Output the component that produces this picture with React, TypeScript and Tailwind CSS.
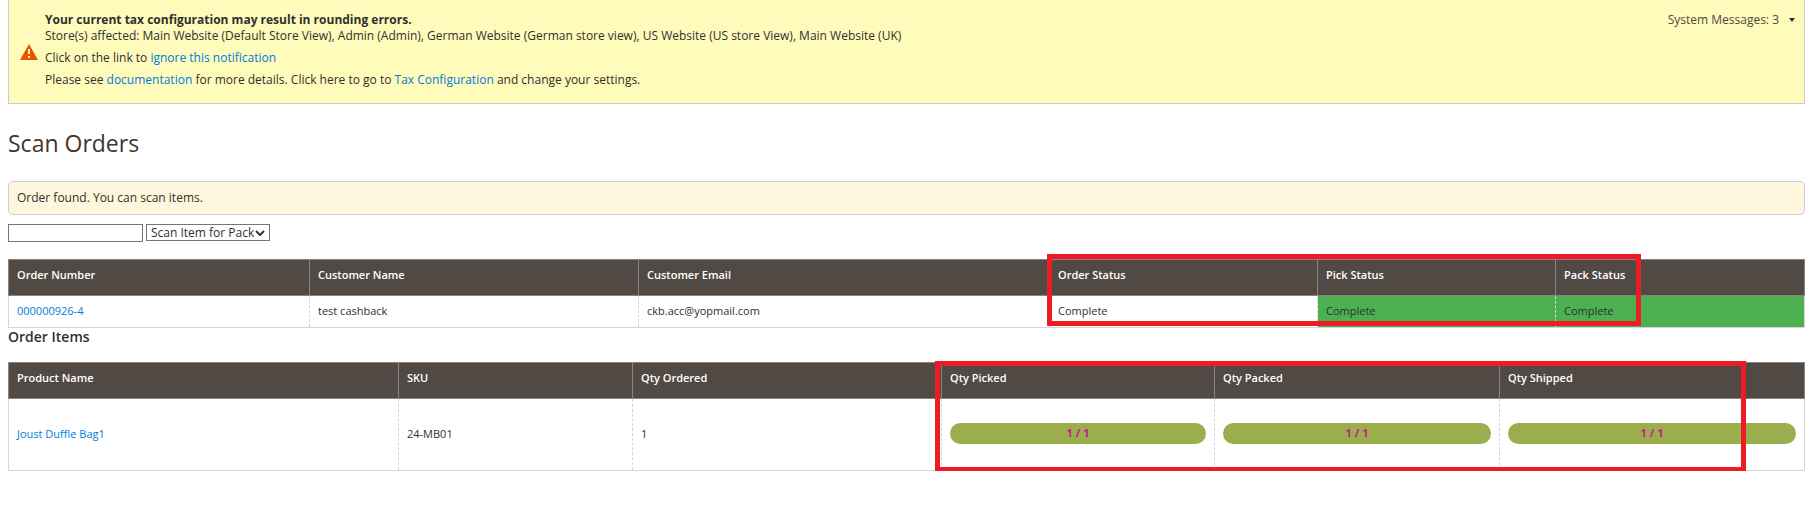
import type { ReactNode } from "react";

const OrderTable = () => {
  return (
    <div className="relative mt-[17px]">
      <table className="w-full table-fixed border-collapse text-[11px] leading-4">
        <colgroup>
          <col className="w-[301px]" />
          <col className="w-[329px]" />
          <col className="w-[411px]" />
          <col className="w-[268px]" />
          <col className="w-[238px]" />
          <col className="w-[249px]" />
        </colgroup>
        <thead>
          <tr>
            <Th>Order Number</Th>
            <Th>Customer Name</Th>
            <Th>Customer Email</Th>
            <Th>Order Status</Th>
            <Th>Pick Status</Th>
            <Th>Pack Status</Th>
          </tr>
        </thead>
        <tbody>
          <tr className="h-8">
            <Td>
              <Link>000000926-4</Link>
            </Td>
            <Td>test cashback</Td>
            <Td>ckb.acc@yopmail.com</Td>
            <Td>Complete</Td>
            <Td done>Complete</Td>
            <Td done>Complete</Td>
          </tr>
        </tbody>
      </table>
      <div className="pointer-events-none absolute -top-[5px] left-[57.8%] h-[72px] w-[33.1%] border-[5px] border-[#ed1c24]" />
    </div>
  );
};

const ItemsTable = () => {
  return (
    <div className="relative mt-4">
      <table className="w-full table-fixed border-collapse text-[11px] leading-4">
        <colgroup>
          <col className="w-[390px]" />
          <col className="w-[234px]" />
          <col className="w-[309px]" />
          <col className="w-[273px]" />
          <col className="w-[285px]" />
          <col className="w-[305px]" />
        </colgroup>
        <thead>
          <tr>
            <Th>Product Name</Th>
            <Th>SKU</Th>
            <Th>Qty Ordered</Th>
            <Th>Qty Picked</Th>
            <Th>Qty Packed</Th>
            <Th>Qty Shipped</Th>
          </tr>
        </thead>
        <tbody>
          <tr className="h-[72px]">
            <Td>
              <Link>Joust Duffle Bag1</Link>
            </Td>
            <Td>24-MB01</Td>
            <Td>1</Td>
            <Td>
              <QtyBar />
            </Td>
            <Td>
              <QtyBar />
            </Td>
            <Td>
              <QtyBar />
            </Td>
          </tr>
        </tbody>
      </table>
      <div className="pointer-events-none absolute -top-px left-[51.6%] h-[111px] w-[45.1%] border-[5px] border-[#ed1c24]" />
    </div>
  );
};

const Th = ({ children }: { children: ReactNode }) => (
  <th className="h-9 border border-[#8a837f] bg-[#514943] px-2 pb-[6px] text-left font-semibold text-white">
    {children}
  </th>
);

const Td = ({ children, done }: { children: ReactNode; done?: boolean }) => (
  <td
    className={
      done
        ? "border-x border-b border-dashed border-[#d6d6d6] bg-[#4caf50] px-2 pb-[2px] [border-bottom-style:solid] last:[border-right-style:solid]"
        : "border-x border-b border-dashed border-[#d6d6d6] px-2 pb-[2px] [border-bottom-style:solid] first:[border-left-style:solid] last:[border-right-style:solid]"
    }
  >
    {children}
  </td>
);

const QtyBar = () => (
  <div className="h-[21px] rounded-full bg-[#9aae4d] text-center leading-5 font-bold text-[#cc1199]">
    1 / 1
  </div>
);

const Link = ({ children }: { children: ReactNode }) => (
  <a href="#" className="text-[#007bdb]">
    {children}
  </a>
);

const SystemMessages = () => {
  return (
    <div className="flex items-start border-x border-b border-[#ccc] bg-[#fffbbb] pt-3 pr-[9px] pb-[15px] pl-[11px] text-xs">
      <svg viewBox="0 0 18 16" className="mt-8 h-4 w-[18px] shrink-0">
        <path d="M9 0 18 16H0z" fill="#eb5202" />
        <path d="M8 5h2v5H8zM8 12h2v2H8z" fill="#fffbbb" />
      </svg>
      <div className="ml-[7px] flex-1 leading-4">
        <p className="font-bold">
          Your current tax configuration may result in rounding errors.
        </p>
        <p>
          Store(s) affected: Main Website (Default Store View), Admin (Admin),
          German Website (German store view), US Website (US store View), Main
          Website (UK)
        </p>
        <p className="mt-[6px]">
          Click on the link to <Link>ignore this notification</Link>
        </p>
        <p className="mt-[6px]">
          Please see <Link>documentation</Link> for more details. Click here to
          go to <Link>Tax Configuration</Link> and change your settings.
        </p>
      </div>
      <button className="flex items-center gap-[10px] leading-4 text-[#514943]">
        System Messages: 3
        <svg viewBox="0 0 6 4" className="h-1 w-[6px]">
          <path d="M0 0h6L3 4z" fill="#303030" />
        </svg>
      </button>
    </div>
  );
};

const ScanForm = () => {
  return (
    <div className="mt-[9px] flex items-start gap-[3px] text-xs">
      <input
        type="text"
        aria-label="Scan barcode"
        className="h-[18px] w-[135px] border border-[#767676] px-1"
      />
      <div className="relative">
        <select
          aria-label="Scan mode"
          className="block h-[17px] w-[124px] appearance-none border border-[#767676] bg-white pl-1 leading-[15px]"
        >
          <option>Scan Item for Pack</option>
        </select>
        <svg
          viewBox="0 0 10 6"
          className="pointer-events-none absolute top-[6px] right-[5px] h-[6px] w-[10px]"
        >
          <path
            d="M1 1l4 4 4-4"
            fill="none"
            stroke="#303030"
            strokeWidth="2"
          />
        </svg>
      </div>
    </div>
  );
};

export default function App() {
  return (
    <div className="bg-white pr-[13px] pl-2 font-['Open_Sans','Noto_Sans',sans-serif] text-[#303030]">
      <SystemMessages />
      <h1 className="mt-[25px] text-[23px] leading-7 text-[#41362f]">
        Scan Orders
      </h1>
      <div className="mt-6 flex h-[34px] items-center rounded-[5px] border border-[#ccc] bg-[#fff7dd] px-2 text-xs">
        Order found. You can scan items.
      </div>
      <ScanForm />
      <OrderTable />
      <h2 className="text-[14px] leading-[18px] font-semibold">Order Items</h2>
      <ItemsTable />
    </div>
  );
}
